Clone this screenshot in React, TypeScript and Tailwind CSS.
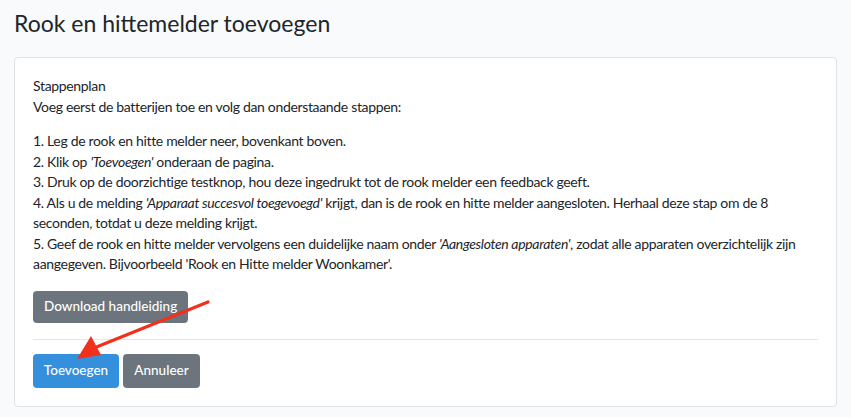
import React from 'react';

const steps: React.ReactNode[] = [
  <>1. Leg de rook en hitte melder neer, bovenkant boven.</>,
  <>
    2. Klik op <em>'Toevoegen'</em> onderaan de pagina.
  </>,
  <>3. Druk op de doorzichtige testknop, hou deze ingedrukt tot de rook melder een feedback geeft.</>,
  <>
    4. Als u de melding <em>'Apparaat succesvol toegevoegd'</em> krijgt, dan is de rook en hitte melder
    aangesloten. Herhaal deze stap om de 8
    <br />
    seconden, totdat u deze melding krijgt.
  </>,
  <>
    5. Geef de rook en hitte melder vervolgens een duidelijke naam onder <em>'Aangesloten apparaten'</em>,
    zodat alle apparaten overzichtelijk zijn
    <br />
    aangegeven. Bijvoorbeeld 'Rook en Hitte melder Woonkamer'.
  </>,
];

function Arrow() {
  return (
    <svg
      className="pointer-events-none absolute left-0 top-0"
      width="851"
      height="417"
      viewBox="0 0 851 417"
    >
      <line x1="208" y1="302" x2="94" y2="348" stroke="#f2311d" strokeWidth="3.2" strokeLinecap="round" />
      <polygon points="77,359 91,336 101,355" fill="#f2311d" />
    </svg>
  );
}

export default function App() {
  return (
    <div
      className="relative h-[417px] w-[851px] overflow-hidden bg-[#f8fafc] text-[#212529]"
      style={{ fontFamily: 'Lato, "Noto Sans", sans-serif' }}
    >
      <div className="px-[14px] pt-[8px]">
        <h3 className="text-[23px] leading-[30px] font-normal">Rook en hittemelder toevoegen</h3>

        <div className="mt-[19px] h-[350px] rounded-[4px] border border-[#dfe2e5] bg-white">
          <div className="px-[18px] pt-[18px] text-[14px] leading-[20.5px] tracking-[-0.33px]">
            <div>Stappenplan</div>
            <div>Voeg eerst de batterijen toe en volg dan onderstaande stappen:</div>

            <div className="mt-[14px] whitespace-nowrap">
              {steps.map((s, i) => (
                <div key={i}>{s}</div>
              ))}
            </div>

            <button className="mt-[16px] h-[32px] rounded-[4px] bg-[#6c757d] px-[11px] text-[13.5px] font-medium tracking-normal text-white">
              Download handleiding
            </button>

            <div className="mt-[16px] border-t border-[#e3e5e8]" />

            <div className="mt-[14px] flex gap-[4px]">
              <button className="h-[34px] w-[86px] rounded-[4px] bg-[#3490dc] text-[13.5px] font-medium tracking-normal text-white">
                Toevoegen
              </button>
              <button className="h-[34px] w-[77px] rounded-[4px] bg-[#6c757d] text-[13.5px] font-medium tracking-normal text-white">
                Annuleer
              </button>
            </div>
          </div>
        </div>
      </div>
      <Arrow />
    </div>
  );
}
